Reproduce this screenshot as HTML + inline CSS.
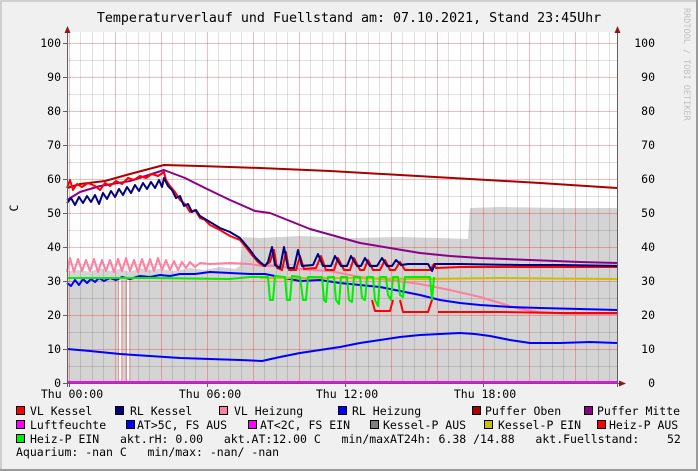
<!DOCTYPE html>
<html><head><meta charset="utf-8"><style>
html,body{margin:0;padding:0;background:#f0f0f0;}
svg{display:block;}
text{font-family:"DejaVu Sans Mono","Liberation Mono",monospace;}
</style></head><body>
<svg width="698" height="471" viewBox="0 0 698 471" xmlns="http://www.w3.org/2000/svg">
<rect x="0" y="0" width="698" height="471" fill="#f0f0f0"/>
<path d="M0,0H698V2H2V471H0Z" fill="#cfcfcf"/>
<path d="M698,0V471H0V469H696V0Z" fill="#9a9a9a"/>
<text x="349" y="22" font-size="13.3" text-anchor="middle" fill="#000">Temperaturverlauf und Fuellstand am: 07.10.2021, Stand 23:45Uhr</text>
<text transform="translate(684,8) rotate(90)" font-size="8.5" fill="#c0c0c0">RRDTOOL / TOBI OETIKER</text>
<rect x="67" y="32" width="550" height="351" fill="#fff"/>
<path d="M68,383 V271 L80,270 L90,272 L100,268 L110,271 L120,269 L130,272 L140,268 L150,270 L160,269 L175,271 L190,268 L205,270 L220,267 L235,269 L240,266 L243,237 L260,238 L300,236 L350,238 L400,237 L440,238 L468,239 L470,208 L500,207 L560,208 L617,208 V383Z" fill="#d4d4d4"/>
<rect x="119" y="280" width="2" height="103" fill="#fff"/>
<rect x="127" y="280" width="2" height="103" fill="#fff"/>
<g stroke="#f48080" stroke-width="0.8"><line x1="118.5" y1="280" x2="118.5" y2="383"/><line x1="122" y1="280" x2="122" y2="383"/><line x1="126" y1="280" x2="126" y2="383"/><line x1="130" y1="280" x2="130" y2="383"/></g>
<g stroke="#000" stroke-opacity="0.12" stroke-width="1">
<path d="M67,366.5H617M67,332.5H617M67,298.5H617M67,264.5H617M67,230.5H617M67,196.5H617M67,162.5H617M67,128.5H617M67,94.5H617M67,60.5H617"/>
<path d="M80.5,32V383M92.5,32V383M103.5,32V383M126.5,32V383M138.5,32V383M149.5,32V383M172.5,32V383M184.5,32V383M195.5,32V383M218.5,32V383M230.5,32V383M241.5,32V383M264.5,32V383M276.5,32V383M287.5,32V383M310.5,32V383M322.5,32V383M333.5,32V383M356.5,32V383M368.5,32V383M379.5,32V383M402.5,32V383M414.5,32V383M425.5,32V383M448.5,32V383M460.5,32V383M471.5,32V383M494.5,32V383M506.5,32V383M517.5,32V383M540.5,32V383M552.5,32V383M563.5,32V383M586.5,32V383M598.5,32V383M609.5,32V383"/>
</g>
<g stroke="#ff0000" stroke-opacity="0.28" stroke-width="1">
<path d="M67,349.5H617M67,315.5H617M67,281.5H617M67,247.5H617M67,213.5H617M67,179.5H617M67,145.5H617M67,111.5H617M67,77.5H617M67,43.5H617"/>
<path d="M69.5,32V383M115.5,32V383M161.5,32V383M207.5,32V383M253.5,32V383M299.5,32V383M345.5,32V383M391.5,32V383M437.5,32V383M483.5,32V383M529.5,32V383M575.5,32V383"/>
</g>
<g fill="none" stroke-linejoin="round" stroke-width="2">
<polyline stroke="#0000ff" points="67,349 90,351 120,354 150,356 180,358 210,359 240,360 262,361 280,357 300,353 320,350 340,347 360,343 380,340 400,337 420,335 440,334 460,333 475,334 490,336 510,340 530,343 560,343 590,342 617,343"/>
<polyline stroke="#8b008b" points="67,200 80,192 100,186 130,181 164,170 185,178 205,188 230,200 255,211 270,213 285,219 310,229 335,236 360,243 390,248 420,253 450,256 480,258 530,260 580,262 617,263"/>
<polyline stroke="#aa0000" points="67,188 80,184 105,181 130,174 164,165 200,166 260,168 330,171 400,175 470,179 540,183 617,188"/>
<polyline stroke="#ff7fa0" points="67,272 70,258 74,272 78,259 82,271 86,260 90,271 94,259 98,272 102,260 106,271 110,260 114,272 118,259 122,271 126,258 130,271 134,260 138,272 142,259 146,271 150,259 154,271 158,258 162,270 166,260 170,270 174,261 178,270 182,262 186,268 190,262 195,267 200,263 210,264 230,263 250,264 262,266 275,266 290,268 310,270 330,271 360,277 390,280 420,284 450,290 480,297 500,303 520,309 540,312 570,314 617,314"/>
<polyline stroke="#0000ff" points="67,283 71,286 75,280 79,285 83,279 87,283 91,279 95,282 99,278 104,281 110,278 116,280 122,277 130,279 140,276 150,277 160,275 170,276 180,274 195,274 210,272 230,273 250,274 265,274 280,277 300,281 320,280 340,283 360,285 380,287 400,291 420,295 440,300 460,303 480,305 510,307 540,308 580,309 617,310"/>
<polyline stroke="#c8c000" points="260,278 350,278 420,279 500,278 617,279"/>
<polyline stroke="#00ee00" points="67,278 150,278 230,279 250,277 268,277 270,300 273,300 275,276 285,277 287,300 290,300 292,276 300,277 303,300 306,300 308,277 322,277 324,300 326,302 328,277 334,277 336,300 339,304 341,277 347,277 349,300 352,302 354,277 360,277 362,298 365,300 367,277 373,277 375,300 378,306 380,277 386,277 388,295 391,300 393,277 398,277 400,295 403,297 405,277 412,277 418,277 430,277 432,300 434,277"/>
<polyline stroke="#ff0000" points="372,300 375,311 390,311 393,300"/>
<polyline stroke="#ff0000" points="400,300 403,312 428,312 432,300"/>
<polyline stroke="#ff0000" points="438,312 500,312 560,313 617,313"/>
<polyline stroke="#ff0000" points="67,188 70,180 73,190 77,184 82,187 88,183 95,186 100,190 105,183 110,186 116,181 122,184 128,178 134,180 140,176 146,178 152,174 158,176 164,172 166,180 170,186 175,192 180,200 185,204 190,212 195,210 200,218 205,220 210,225 220,230 230,236 240,240 245,246 252,255 258,262 264,266 270,262 274,250 277,268 282,270 286,252 289,270 296,270 300,256 304,269 316,268 321,256 326,270 334,270 338,258 344,270 350,270 354,258 360,270 364,270 368,260 373,270 380,270 385,260 390,270 395,270 400,262 405,270 410,270 430,270 434,264 436,268 460,267 520,267 560,267 617,267"/>
<polyline stroke="#000080" points="67,203 71,198 75,205 79,197 83,203 87,196 91,202 95,195 99,204 103,193 107,199 111,191 115,197 119,189 123,195 127,187 131,193 135,185 139,191 143,183 147,189 151,182 155,188 159,180 162,187 164,178 168,186 172,190 176,198 180,196 184,206 188,204 192,212 196,210 200,216 210,222 220,228 230,232 240,238 245,244 250,250 255,257 260,262 265,266 268,262 272,247 275,265 280,268 284,247 288,268 294,268 298,250 302,266 313,265 318,254 323,266 331,266 335,256 341,266 347,266 351,256 357,266 361,266 365,258 370,266 377,266 382,258 387,266 392,266 396,260 401,265 408,264 428,264 432,271 435,264 460,264 520,265 560,265 617,266"/>
<line x1="67" y1="382" x2="617" y2="382" stroke="#ff00ff" stroke-width="2"/>
</g>
<g stroke="#606060" stroke-width="1">
<line x1="67.5" y1="30" x2="67.5" y2="387"/>
<line x1="617.5" y1="30" x2="617.5" y2="387"/>
<line x1="63" y1="383.5" x2="622" y2="383.5"/>
<path d="M63,349.5H67M63,315.5H67M63,281.5H67M63,247.5H67M63,213.5H67M63,179.5H67M63,145.5H67M63,111.5H67M63,77.5H67M63,43.5H67"/>
<path d="M69.5,383V387M207.5,383V387M345.5,383V387M483.5,383V387"/>
</g>
<path d="M64.5,33L67.5,26L70.5,33Z" fill="#8b1a1a"/>
<path d="M614.5,33L617.5,26L620.5,33Z" fill="#8b1a1a"/>
<path d="M619,380.5L626,383.5L619,386.5Z" fill="#8b1a1a"/>
<g font-size="11.5" fill="#000" text-anchor="end">
<text x="61" y="47">100</text><text x="61" y="81">90</text><text x="61" y="115">80</text><text x="61" y="149">70</text><text x="61" y="183">60</text><text x="61" y="217">50</text><text x="61" y="251">40</text><text x="61" y="285">30</text><text x="61" y="319">20</text><text x="61" y="353">10</text><text x="61" y="387">0</text>
<text x="655" y="47">100</text><text x="655" y="81">90</text><text x="655" y="115">80</text><text x="655" y="149">70</text><text x="655" y="183">60</text><text x="655" y="217">50</text><text x="655" y="251">40</text><text x="655" y="285">30</text><text x="655" y="319">20</text><text x="655" y="353">10</text><text x="655" y="387">0</text>
</g>
<text transform="translate(18,208) rotate(-90)" font-size="11.5" text-anchor="middle">C</text>
<g font-size="11.5" fill="#000" text-anchor="middle">
<text x="72" y="398">Thu 00:00</text><text x="210" y="398">Thu 06:00</text><text x="347" y="398">Thu 12:00</text><text x="485" y="398">Thu 18:00</text>
</g>
<g stroke="#000" stroke-width="1">
<rect x="16.5" y="406.5" width="8" height="8" fill="#ff0000"/>
<rect x="115.5" y="406.5" width="8" height="8" fill="#000080"/>
<rect x="219.5" y="406.5" width="8" height="8" fill="#ff7fa0"/>
<rect x="338.5" y="406.5" width="8" height="8" fill="#0000ff"/>
<rect x="472.5" y="406.5" width="8" height="8" fill="#aa0000"/>
<rect x="584.5" y="406.5" width="8" height="8" fill="#8b008b"/>
<rect x="16.5" y="420.5" width="8" height="8" fill="#ff00ff"/>
<rect x="126.5" y="420.5" width="8" height="8" fill="#0000ff"/>
<rect x="248.5" y="420.5" width="8" height="8" fill="#ff00ff"/>
<rect x="370.5" y="420.5" width="8" height="8" fill="#808080"/>
<rect x="484.5" y="420.5" width="8" height="8" fill="#c8c000"/>
<rect x="597.5" y="420.5" width="8" height="8" fill="#ff0000"/>
<rect x="16.5" y="434.5" width="8" height="8" fill="#00ee00"/>
</g>
<g font-size="11.5" fill="#000">
<text x="30" y="415">VL Kessel</text><text x="130" y="415">RL Kessel</text><text x="234" y="415">VL Heizung</text><text x="352" y="415">RL Heizung</text><text x="485" y="415">Puffer Oben</text><text x="597" y="415">Puffer Mitte</text>
<text x="30" y="429">Luftfeuchte</text><text x="137" y="429">AT&gt;5C, FS AUS</text><text x="260" y="429">AT&lt;2C, FS EIN</text><text x="383" y="429">Kessel-P AUS</text><text x="498" y="429">Kessel-P EIN</text><text x="609" y="429">Heiz-P AUS</text>
<text x="30" y="443" xml:space="preserve">Heiz-P EIN   akt.rH: 0.00   akt.AT:12.00 C   min/maxAT24h: 6.38 /14.88   akt.Fuellstand:    52</text>
<text x="16" y="456" xml:space="preserve">Aquarium: -nan C   min/max: -nan/ -nan</text>
</g>
</svg>
</body></html>
